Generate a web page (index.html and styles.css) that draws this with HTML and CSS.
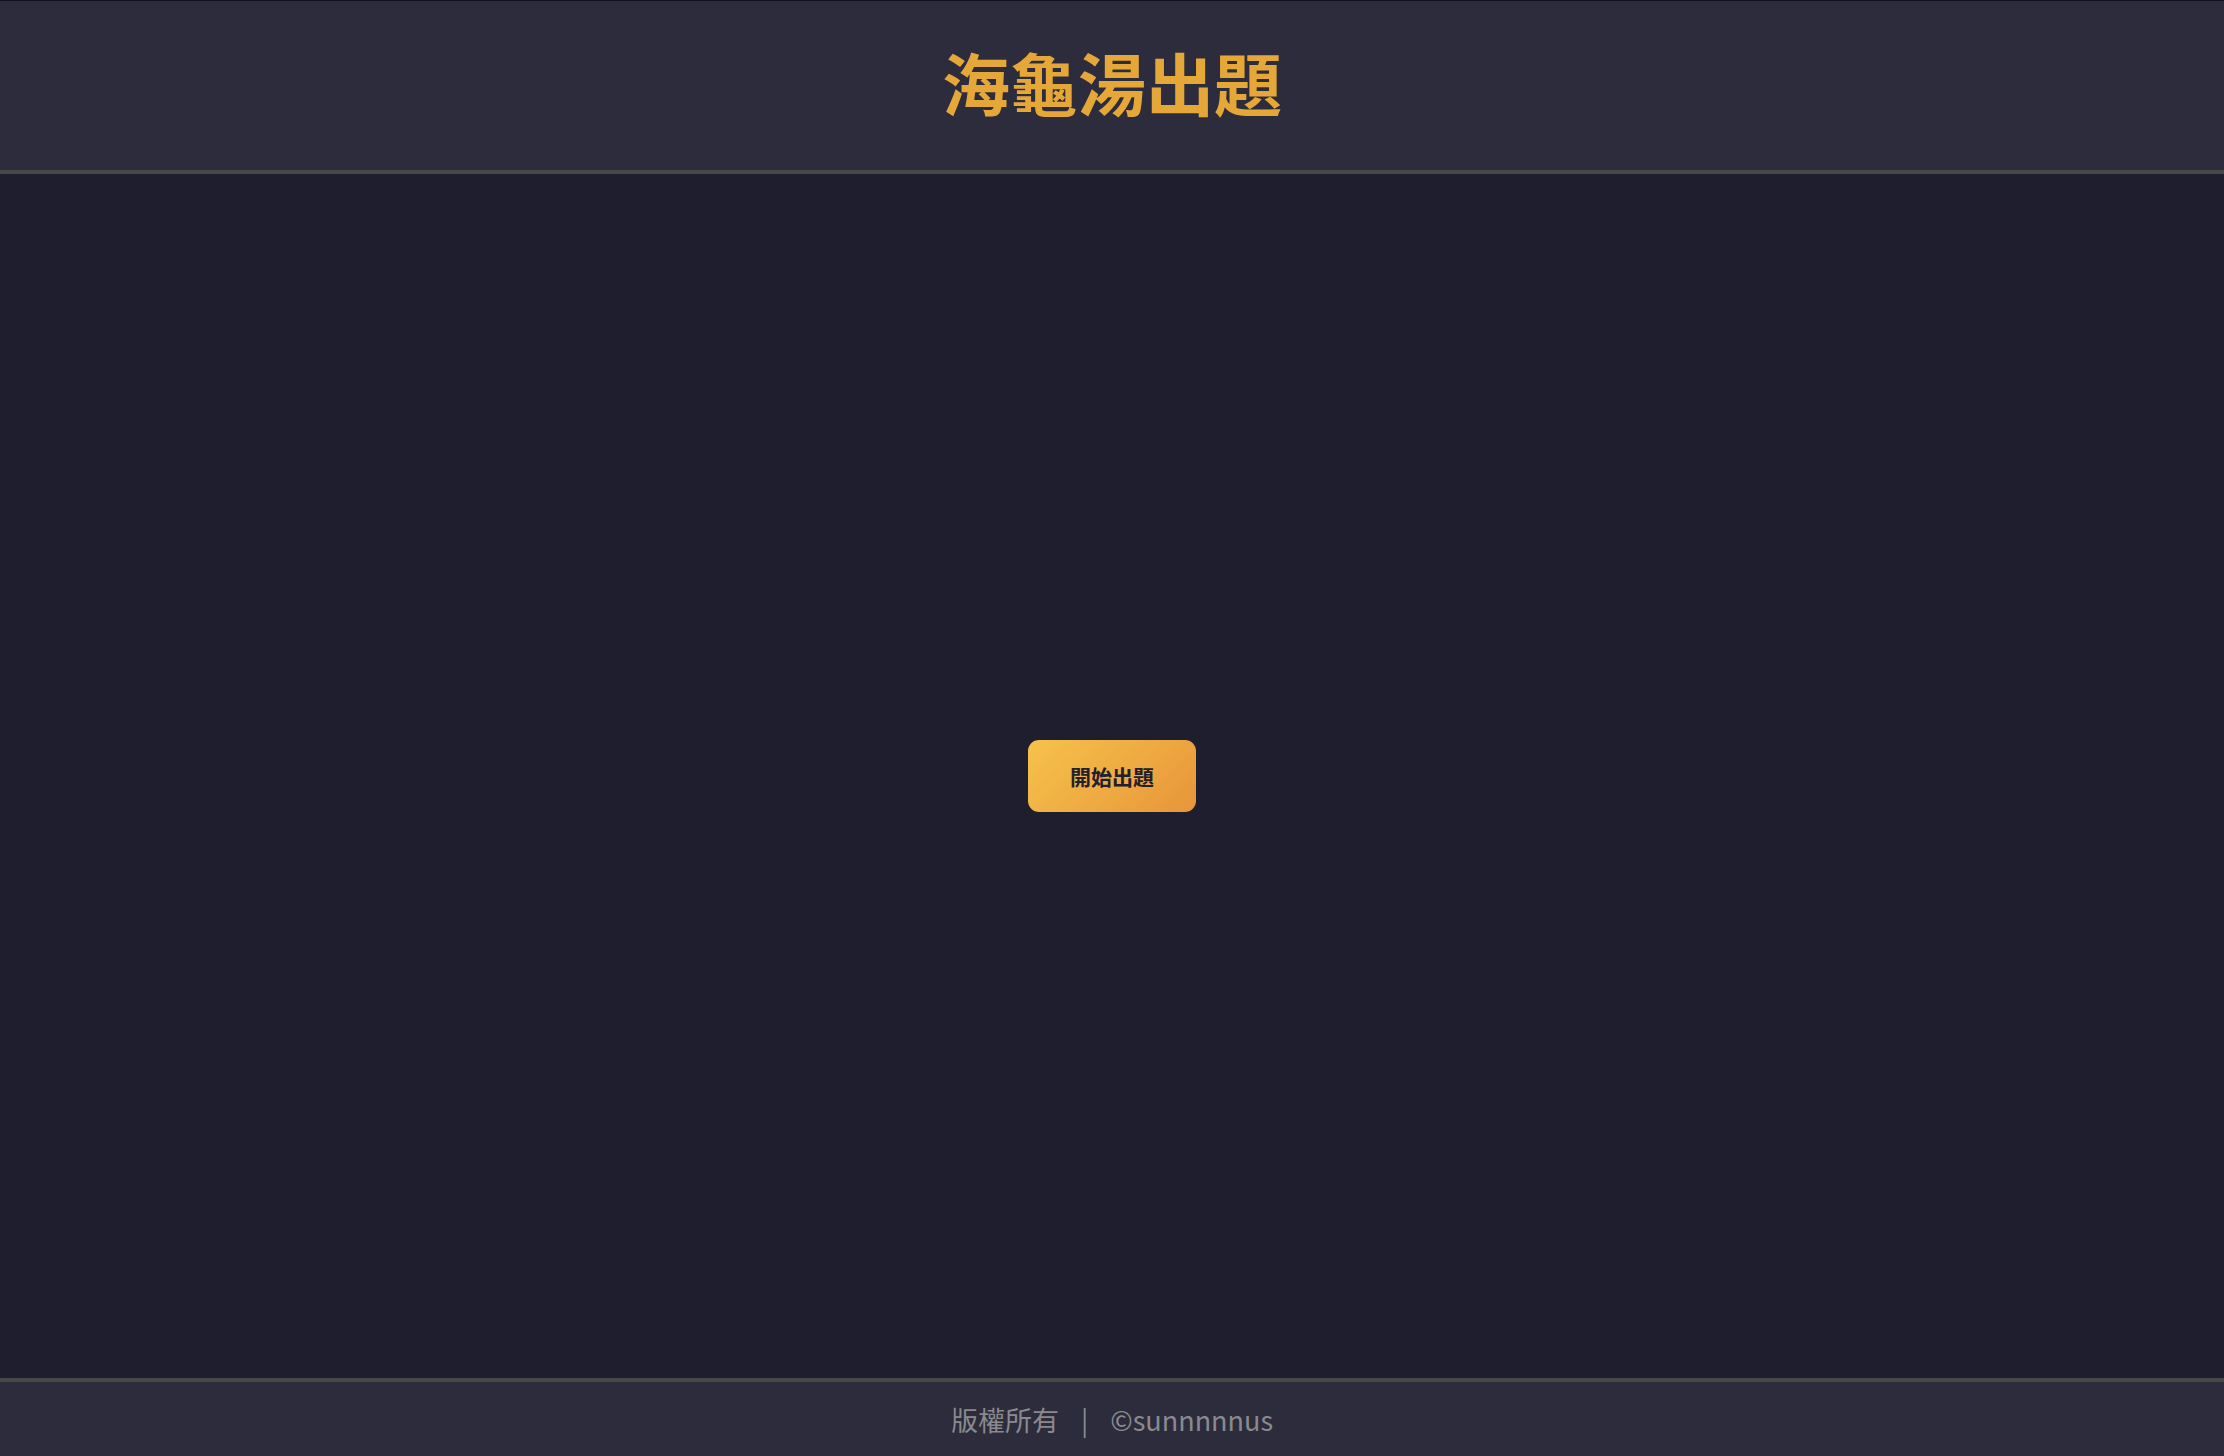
FILE: index.html
```html
<!DOCTYPE html>
<html lang="zh-Hant">
<head>
<meta charset="utf-8">
<title>海龜湯出題</title>
<link rel="stylesheet" href="styles.css">
</head>
<body>
<div class="page">
  <header class="header">
    <h1 class="title">海龜湯出題</h1>
  </header>
  <main class="main">
    <button class="start-btn" type="button">開始出題</button>
  </main>
  <footer class="footer">
    <span class="footer-text">版權所有</span>
    <span class="footer-sep">|</span>
    <span class="footer-text">©sunnnnnus</span>
  </footer>
</div>
</body>
</html>
```
FILE: styles.css
```css
html, body {
  margin: 0;
  padding: 0;
  height: 100%;
  background: #1f1e2e;
  font-family: "Noto Sans CJK TC", "Noto Sans", sans-serif;
}
.page {
  display: flex;
  flex-direction: column;
  height: 100vh;
}
.header {
  height: 169px;
  box-sizing: content-box;
  flex: none;
  border-top: 1px solid #12111d;
  border-bottom: 4px solid #48484b;
  background: #2d2c3d;
  display: flex;
  align-items: center;
  justify-content: center;
}
.title {
  margin: 0 0 8px 0;
  font-size: 68px;
  font-weight: 700;
  color: #e5a838;
  letter-spacing: 0;
  line-height: 1;
}
.main {
  flex: 1;
  display: flex;
  align-items: center;
  justify-content: center;
  background: #1f1e2e;
}
.start-btn {
  width: 168px;
  height: 72px;
  border: none;
  border-radius: 11px;
  background: linear-gradient(135deg, #f6c24b 0%, #e8953a 100%);
  color: #22202c;
  font-family: "Noto Sans CJK TC", sans-serif;
  font-size: 21px;
  font-weight: 700;
  cursor: pointer;
  padding: 0;
}
.footer {
  height: 74px;
  flex: none;
  border-top: 4px solid #48484b;
  background: #2d2c3d;
  display: flex;
  align-items: center;
  justify-content: center;
  gap: 22px;
  color: #8a8a8e;
  font-size: 27px;
}
.footer-sep {
  color: #8a8a8e;
  font-weight: 400;
}
```
